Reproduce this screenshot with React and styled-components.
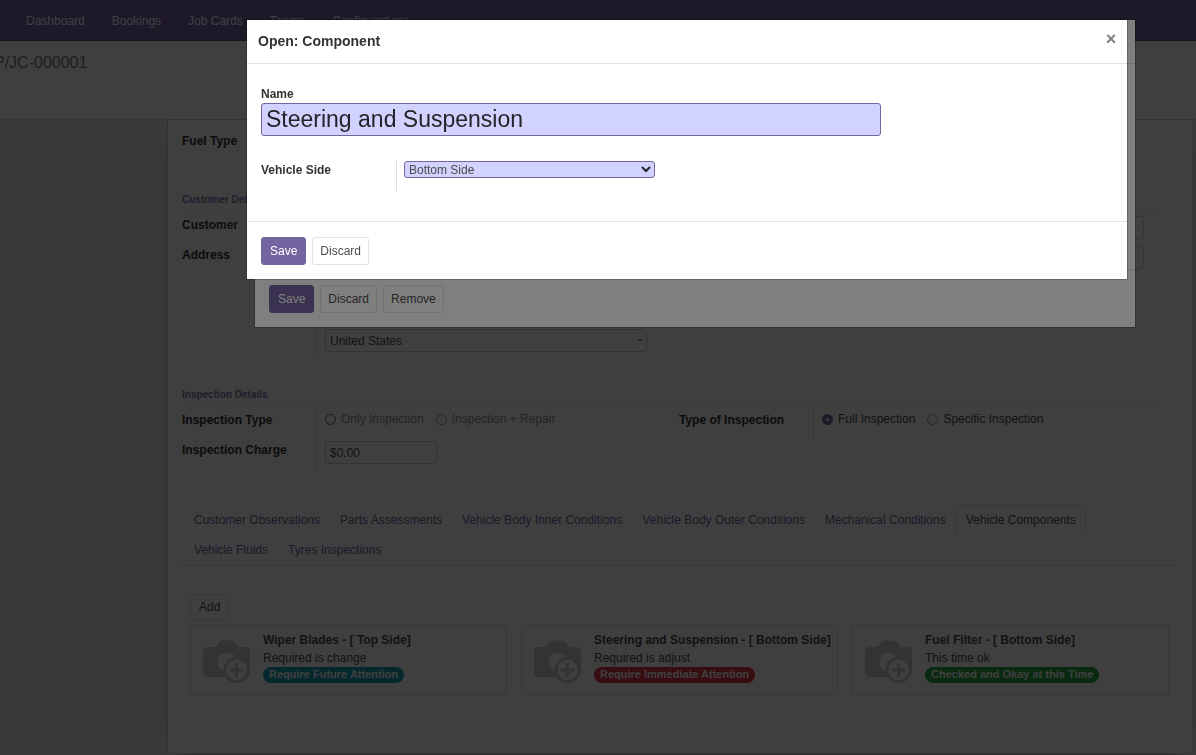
import React from "react";
import styled, { createGlobalStyle } from "styled-components";

const Global = createGlobalStyle`
  * { box-sizing: border-box; }
  body { margin: 0; font-family: "Liberation Sans", Arial, sans-serif; font-size: 12px; line-height: 18px; color: #4c4c4c; background: #fff; }
  button, input, select { font: inherit; color: inherit; }
  h1, h2, h3, p { margin: 0; padding: 0; }
`;

const Page = styled.div`
  min-height: 100vh;
  display: flex;
  flex-direction: column;
  overflow: hidden;
`;

const NavBar = styled.nav`
  height: 41px;
  flex: none;
  display: flex;
  align-items: center;
  gap: 27px;
  padding: 2px 26px 0;
  background: #7464a0;
  border-bottom: 1px solid #5f5283;
`;

const NavLink = styled.a`
  color: #fff;
  text-decoration: none;
`;

const ControlPanel = styled.header`
  height: 79px;
  flex: none;
  padding: 12px 0;
  border-bottom: 1px solid #ced4da;
  background: #fff;
`;

const Breadcrumb = styled.h1`
  margin-left: -6px;
  font-size: 16px;
  line-height: 20px;
  font-weight: 400;
  color: #777;
`;

const Backdrop = styled.main`
  flex: 1;
  display: flex;
  padding: 0 4px 2px 167px;
  background: repeating-conic-gradient(#eee 0 25%, #e6e6e6 0 50%) 0 0 / 2px 2px;
`;

const Sheet = styled.div`
  flex: 1;
  min-width: 0;
  padding: 0 16px 0 14px;
  background: #fff;
  border-left: 1px solid #c8c8d3;
  box-shadow: 0 5px 20px -15px #000;
`;

const Group = styled.section`
  padding-top: ${(p) => p.$top}px;
`;

const GroupTitle = styled.h2`
  font-size: 10px;
  line-height: 16px;
  font-weight: 700;
  color: #7c7bad;
  border-bottom: 1px solid #f5f5f5;
  margin: 0 12px 5px 0;
`;

const Columns = styled.div`
  display: grid;
  grid-template-columns: 1fr 1fr;
  align-items: start;
`;

const FieldRow = styled.div`
  display: grid;
  grid-template-columns: 134px minmax(0, 1fr);
  min-height: 30px;
`;

const Label = styled.label`
  font-weight: 700;
  padding-top: 2px;
  color: #333;
  white-space: nowrap;
`;

const Cell = styled.div`
  border-left: 1px solid #ddd;
  padding: ${(p) => p.$pad || "0 32px 0 8px"};
  display: flex;
  align-items: flex-start;
  gap: 12px;
`;

const TextInput = styled.input`
  width: ${(p) => p.$w || "100%"};
  height: 23px;
  padding: 0 4px;
  border: 1px solid #ccc;
  border-radius: 3px;
  background: #fff;
`;

const CountrySelect = styled.select`
  appearance: none;
  width: 100%;
  height: 23px;
  padding: 0 4px;
  border: 1px solid #ccc;
  border-radius: 3px;
  background: #fff;
`;

const SelectWrap = styled.span`
  position: relative;
  display: block;
  flex: 1;
  min-width: 0;
`;

const Caret = styled.svg`
  position: absolute;
  pointer-events: none;
  right: 4px;
  top: 0;
  bottom: 0;
  margin: auto 0;
`;

const Choice = styled.label`
  display: flex;
  align-items: center;
  gap: 5px;
  padding-top: 1px;
  white-space: nowrap;
  color: ${(p) => (p.$muted ? "#8f8f8f" : "#4c4c4c")};
`;

const Radio = styled.input`
  appearance: none;
  width: 11px;
  height: 11px;
  margin: 0;
  border: 1px solid ${(p) => (p.$strong ? "#5f5283" : "#999")};
  border-radius: 50%;
  background: transparent;
  &:checked { border: 4px solid #7464a0; }
`;

const Tabs = styled.ul`
  display: flex;
  flex-wrap: wrap;
  list-style: none;
  margin: 36px 0 0;
  padding: 0 80px 0 2px;
  border-bottom: 1px solid #dee2e6;
`;

const Tab = styled.a`
  display: block;
  height: 30px;
  padding: 5px 9px;
  border: 1px solid ${(p) => (p.$active ? "#dee2e6" : "transparent")};
  border-bottom: 0;
  border-radius: 3px 3px 0 0;
  color: ${(p) => (p.$active ? "#495057" : "#7464a0")};
  text-decoration: none;
  white-space: nowrap;
`;

const Button = styled.button`
  height: 28px;
  padding: 0 ${(p) => (p.$primary ? 8 : 7)}px;
  border-radius: 3px;
  border: 1px solid ${(p) => (p.$primary ? "#7464a0" : "#dee2e6")};
  background: ${(p) => (p.$primary ? "#7464a0" : "#fff")};
  color: ${(p) => (p.$primary ? "#fff" : "#4c4c4c")};
`;

const AddButton = styled(Button)`
  display: block;
  height: 26px;
  padding: 0 8px;
`;

const Kanban = styled.div`
  padding: 28px 7px 0 8px;
`;

const Cards = styled.div`
  display: grid;
  grid-template-columns: repeat(3, minmax(0, 1fr));
  gap: 14px;
  margin-top: 5px;
`;

const Card = styled.article`
  display: flex;
  gap: 13px;
  height: 70px;
  padding: 5px 8px 5px 12px;
  border: 1px solid #dee2e6;
  white-space: nowrap;
`;

const CardIcon = styled.svg`
  flex: none;
`;

const CardTitle = styled.h3`
  font-size: 12px;
  line-height: 18px;
  font-weight: 700;
`;

const Badge = styled.span`
  display: block;
  width: max-content;
  height: 16px;
  line-height: 15px;
  padding: 0 6px;
  border-radius: 8px;
  font-size: 11px;
  font-weight: 700;
  color: #fff;
  background: ${(p) => p.$color};
`;

const Overlay = styled.div`
  position: fixed;
  inset: 0;
  display: flex;
  justify-content: flex-end;
  align-items: flex-start;
  padding: 20px ${(p) => p.$right}px 0 20px;
  background: rgba(0, 0, 0, 0.5);
`;

const Dialog = styled.section`
  flex: 0 1 880px;
  background: #fff;
  box-shadow: 0 0 0 1px rgba(0, 0, 0, 0.2);
`;

const DialogHeader = styled.header`
  display: flex;
  justify-content: space-between;
  height: 44px;
  padding: 12px 10px 0 11px;
  border-bottom: 1px solid #dee2e6;
`;

const DialogTitle = styled.h2`
  font-size: 14px;
  line-height: 18px;
  font-weight: 700;
  color: #333;
`;

const Close = styled.button`
  height: 14px;
  padding: 0;
  border: 0;
  width: 12px;
  background: none;
  font-size: 18px;
  line-height: 14px;
  font-weight: 700;
  color: #7f7f7f;
`;

const DialogBody = styled.div`
  min-height: ${(p) => p.$h}px;
  padding: 21px 14px 0;
`;

const NameInput = styled.input`
  display: block;
  width: 100%;
  max-width: 620px;
  height: 33px;
  padding: 0 4px;
  border: 1px solid #7464a0;
  border-radius: 3px;
  background: #d2d2ff;
  font-size: 23px;
  color: #212529;
`;

const SideRow = styled.div`
  display: grid;
  grid-template-columns: 135px 259px;
  height: 30px;
  margin-top: 25px;
`;

const SideLabel = styled(Label)`
  padding-top: 0;
`;

const SideSelect = styled.select`
  appearance: none;
  display: block;
  width: 100%;
  height: 17px;
  padding: 0 4px;
  line-height: 14px;
  border: 1px solid #7464a0;
  border-radius: 3px;
  background: #d2d2ff;
`;

const DialogFooter = styled.footer`
  display: flex;
  gap: 6px;
  padding: 15px 14px 14px;
  border-top: 1px solid #dee2e6;
`;

const tabs = [
  "Customer Observations",
  "Parts Assessments",
  "Vehicle Body Inner Conditions",
  "Vehicle Body Outer Conditions",
  "Mechanical Conditions",
  "Vehicle Components",
  "Vehicle Fluids",
  "Tyres Inspections",
];

const cards = [
  { title: "Wiper Blades - [ Top Side]", note: "Required is change", badge: "Require Future Attention", color: "#17a2b8" },
  { title: "Steering and Suspension - [ Bottom Side]", note: "Required is adjust", badge: "Require Immediate Attention", color: "#dc3545" },
  { title: "Fuel Filter - [ Bottom Side]", note: "This time ok", badge: "Checked and Okay at this Time", color: "#28a745" },
];

function CameraIcon() {
  return (
    <CardIcon width="47" height="56" viewBox="0 0 47 56" aria-hidden="true">
      <path fill="#ccc" d="M5 16h6q1 0 2-1l3.500-4q1-1.500 3-1.500h9q2 0 3 1.500l3.500 4q1 1 2 1h5q5 0 5 5v20q0 5-5 5H5q-5 0-5-5V21q0-5 5-5z" />
      <circle cx="24" cy="31" r="9.500" fill="#fff" />
      <circle cx="33.500" cy="39" r="11.700" fill="#fff" stroke="#ccc" strokeWidth="3" />
      <path d="M26.500 39h14M33.500 32v14" stroke="#ccc" strokeWidth="3" />
    </CardIcon>
  );
}

export default function App() {
  return (
    <>
      <Global />
      <Page>
        <NavBar>
          {["Dashboard", "Bookings", "Job Cards", "Teams", "Configurations"].map((n) => (
            <NavLink href="#" key={n}>{n}</NavLink>
          ))}
        </NavBar>
        <ControlPanel>
          <Breadcrumb>P/JC-000001</Breadcrumb>
        </ControlPanel>
        <Backdrop>
          <Sheet>
            <Group $top={10}>
              <Columns>
                <FieldRow>
                  <Label htmlFor="fuel">Fuel Type</Label>
                  <Cell><TextInput id="fuel" /></Cell>
                </FieldRow>
              </Columns>
            </Group>
            <Group $top={32}>
              <GroupTitle>Customer Details</GroupTitle>
              <Columns>
                <div>
                  <FieldRow>
                    <Label htmlFor="customer">Customer</Label>
                    <Cell><TextInput id="customer" /></Cell>
                  </FieldRow>
                  <FieldRow>
                    <Label htmlFor="street">Address</Label>
                    <Cell><TextInput id="street" /></Cell>
                  </FieldRow>
                </div>
                <div>
                  <FieldRow>
                    <span />
                    <Cell $pad="2px 32px 0 8px"><TextInput aria-label="Email" /></Cell>
                  </FieldRow>
                  <FieldRow>
                    <span />
                    <Cell $pad="2px 32px 0 8px"><TextInput aria-label="Phone" /></Cell>
                  </FieldRow>
                </div>
              </Columns>
              <Columns>
                <FieldRow>
                  <span />
                  <Cell $pad="55px 32px 4px 8px">
                    <SelectWrap>
                      <CountrySelect aria-label="Country"><option>United States</option></CountrySelect>
                      <Caret width="6" height="3" viewBox="0 0 6 3"><path d="M0 0h6L3 3z" fill="#999" /></Caret>
                    </SelectWrap>
                  </Cell>
                </FieldRow>
              </Columns>
            </Group>
            <Group $top={31}>
              <GroupTitle>Inspection Details</GroupTitle>
              <Columns>
                <div>
                  <FieldRow>
                    <Label as="span">Inspection Type</Label>
                    <Cell>
                      <Choice $muted><Radio type="radio" name="type" $strong />Only Inspection</Choice>
                      <Choice $muted><Radio type="radio" name="type" />Inspection + Repair</Choice>
                    </Cell>
                  </FieldRow>
                  <FieldRow>
                    <Label htmlFor="charge">Inspection Charge</Label>
                    <Cell $pad="2px 0 4px 8px"><TextInput id="charge" $w="112px" defaultValue="$0.00" /></Cell>
                  </FieldRow>
                </div>
                <FieldRow>
                  <Label as="span">Type of Inspection</Label>
                  <Cell>
                    <Choice><Radio type="radio" name="scope" defaultChecked />Full Inspection</Choice>
                    <Choice><Radio type="radio" name="scope" />Specific Inspection</Choice>
                  </Cell>
                </FieldRow>
              </Columns>
            </Group>
            <Tabs>
              {tabs.map((t) => (
                <li key={t}><Tab href="#" $active={t === "Vehicle Components"}>{t}</Tab></li>
              ))}
            </Tabs>
            <Kanban>
              <AddButton>Add</AddButton>
              <Cards>
                {cards.map((c) => (
                  <Card key={c.title}>
                    <CameraIcon />
                    <div>
                      <CardTitle>{c.title}</CardTitle>
                      <p>{c.note}</p>
                      <Badge $color={c.color}>{c.badge}</Badge>
                    </div>
                  </Card>
                ))}
              </Cards>
            </Kanban>
          </Sheet>
        </Backdrop>
      </Page>

      <Overlay $right={61}>
        <Dialog>
          <DialogHeader />
          <DialogBody $h={205} />
          <DialogFooter>
            <Button $primary>Save</Button>
            <Button>Discard</Button>
            <Button>Remove</Button>
          </DialogFooter>
        </Dialog>
      </Overlay>

      <Overlay $right={69}>
        <Dialog role="dialog" aria-modal="true" aria-labelledby="dialog-title">
          <DialogHeader>
            <DialogTitle id="dialog-title">Open: Component</DialogTitle>
            <Close aria-label="Close">×</Close>
          </DialogHeader>
          <DialogBody $h={157}>
            <Label htmlFor="name">Name</Label>
            <NameInput id="name" defaultValue="Steering and Suspension" />
            <SideRow>
              <SideLabel htmlFor="side">Vehicle Side</SideLabel>
              <Cell $pad="0 0 0 7px">
                <SelectWrap>
                  <SideSelect id="side"><option>Bottom Side</option></SideSelect>
                  <Caret width="10" height="7" viewBox="0 0 10 7"><path d="M1 1l4 4 4-4" fill="none" stroke="#212529" strokeWidth="2" /></Caret>
                </SelectWrap>
              </Cell>
            </SideRow>
          </DialogBody>
          <DialogFooter>
            <Button $primary>Save</Button>
            <Button>Discard</Button>
          </DialogFooter>
        </Dialog>
      </Overlay>
    </>
  );
}
